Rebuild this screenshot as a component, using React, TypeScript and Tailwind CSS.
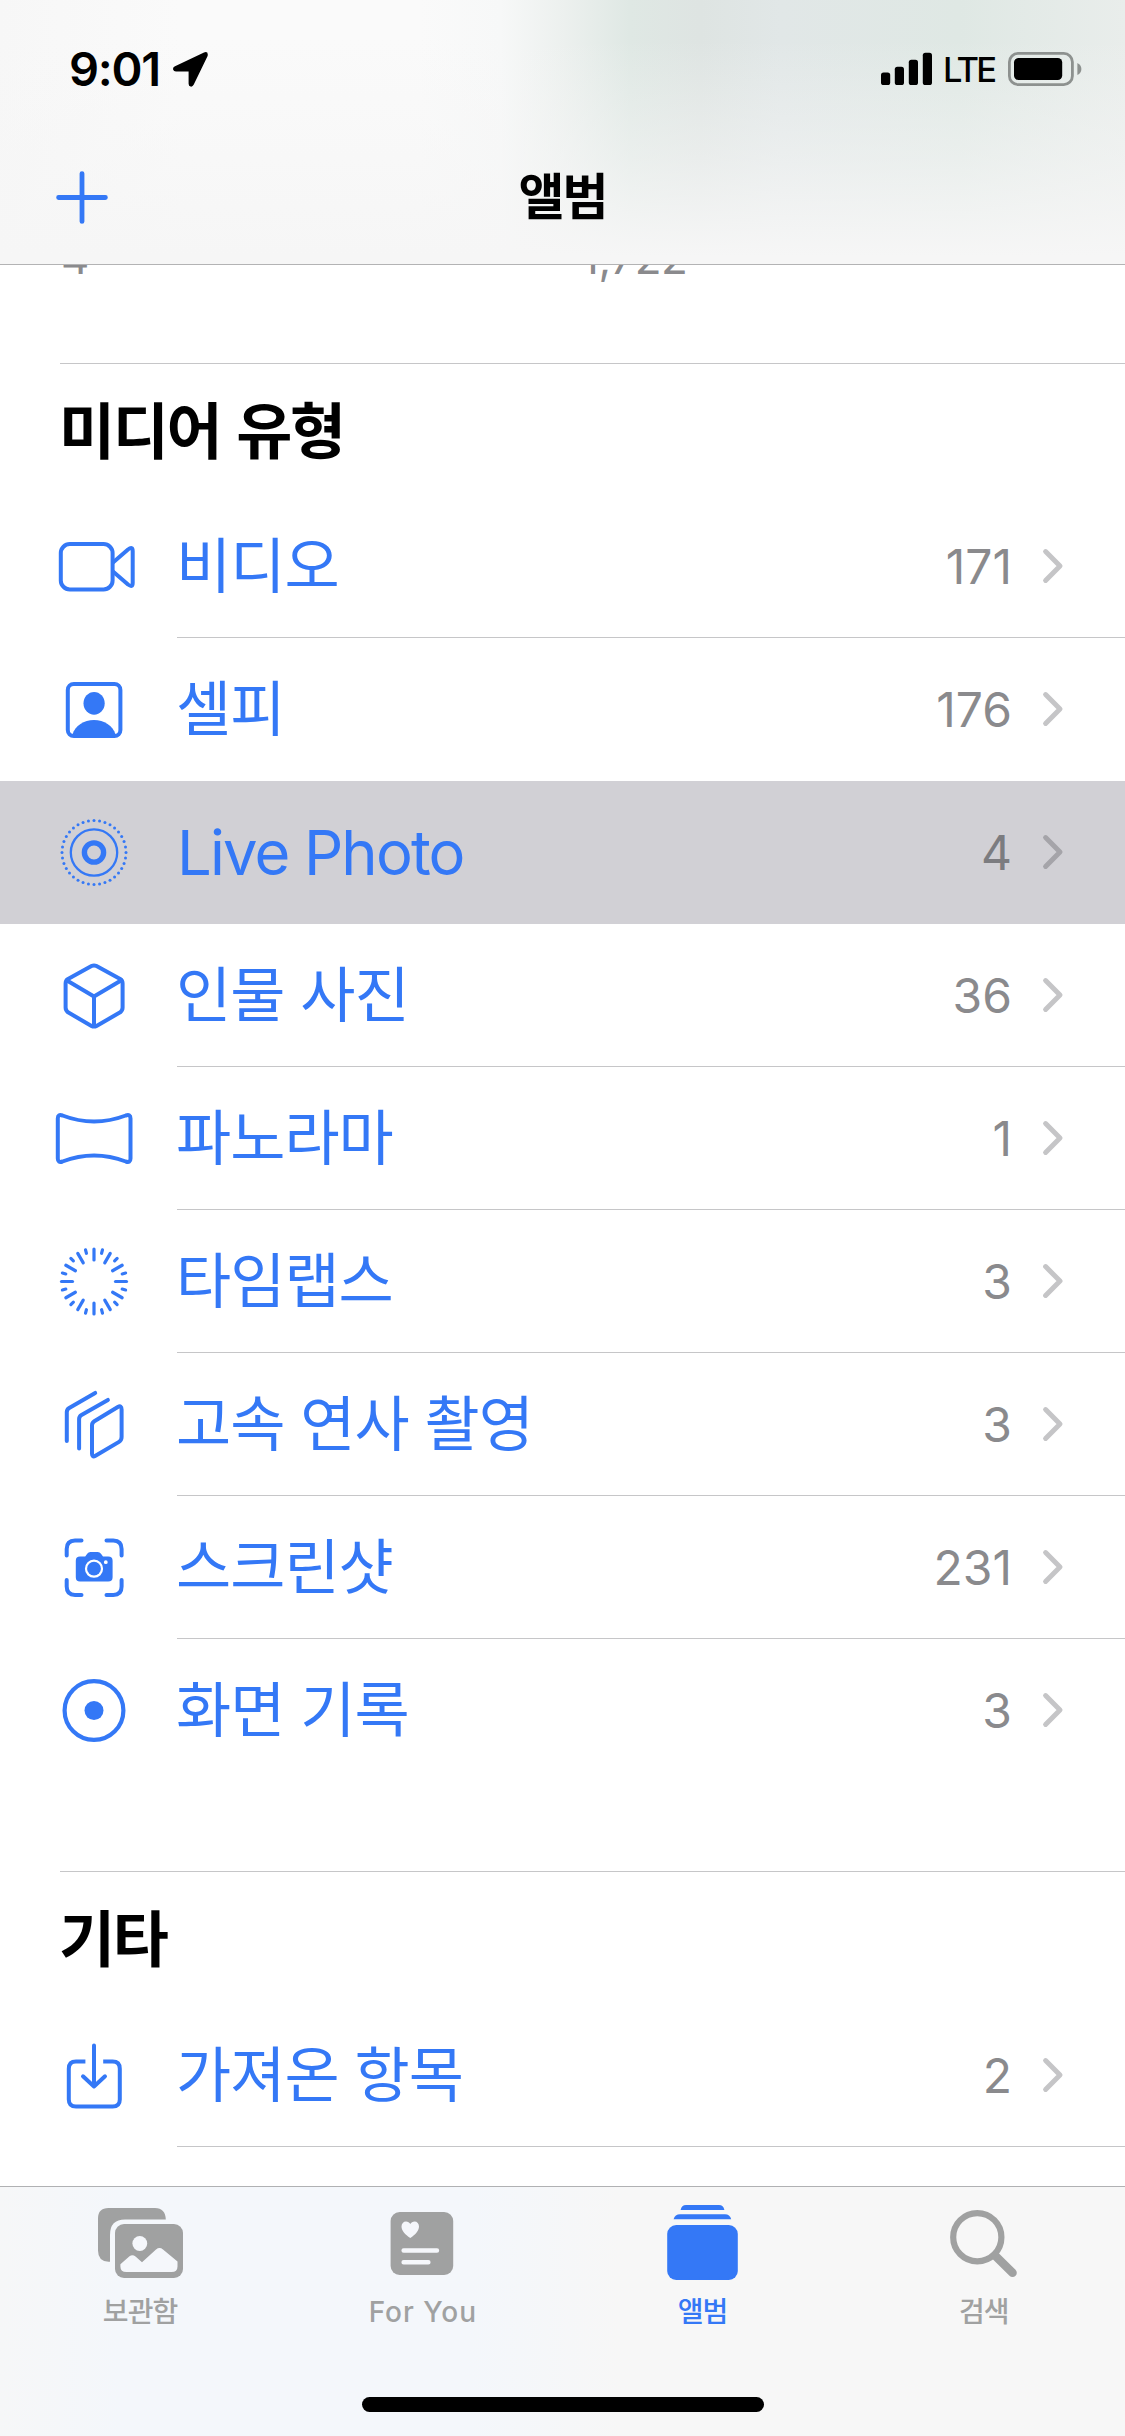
import React from "react";

const BLUE = "#3478f6";

function RowSvg({ children }: { children: React.ReactNode }) {
  return (
    <svg
      viewBox="-45 -45.5 90 91"
      className="h-[91px] w-[90px] shrink-0 text-[#3478f6]"
      fill="none"
      stroke="currentColor"
      strokeWidth={4}
      strokeLinecap="round"
      strokeLinejoin="round"
    >
      {children}
    </svg>
  );
}

const VideoIcon = () => (
  <RowSvg>
    <rect x={-33.2} y={-22.4} width={51.8} height={45.3} rx={9} />
    <path d="M19 -4 L34 -17 Q38.7 -20.5 38.7 -15.5 V16.5 Q38.7 21.5 34 18 L19 5" />
  </RowSvg>
);

const SelfieIcon = () => (
  <RowSvg>
    <rect x={-26.2} y={-25.5} width={52.6} height={52} rx={6} />
    <ellipse cx={0.1} cy={-6.2} rx={10.6} ry={11.4} fill="currentColor" stroke="none" />
    <path
      d="M-21.5 25 C-19 16 -10 10.5 0 10.5 S19 16 21.5 25 V27 H-21.5Z"
      fill="currentColor"
      stroke="none"
    />
  </RowSvg>
);

const LiveIcon = () => (
  <RowSvg>
    {Array.from({ length: 36 }, (_, i) => (
      <circle
        key={i}
        cx={32 * Math.cos((i * Math.PI) / 18)}
        cy={32 * Math.sin((i * Math.PI) / 18)}
        r={1.5}
        fill="currentColor"
        stroke="none"
      />
    ))}
    <circle r={23.2} strokeWidth={2.3} />
    <circle r={9.6} strokeWidth={5.4} />
  </RowSvg>
);

const CubeIcon = () => (
  <RowSvg>
    <path d="M-2.5 -29.4 Q0 -30.8 2.5 -29.4 L26.2 -16.4 Q28.6 -15 28.6 -12 V12 Q28.6 15 26.2 16.8 L2.5 30.4 Q0 31.8 -2.5 30.4 L-26 16.8 Q-28.4 15 -28.4 12 V-12 Q-28.4 -15 -26 -16.4 Z" />
    <path d="M-27 -15 L0 1 L27 -15 M0 1 V30" />
  </RowSvg>
);

const PanoramaIcon = () => (
  <RowSvg>
    <path d="M-36.2 -20 Q-36.2 -24.6 -31.5 -23 Q0 -11 31.8 -23 Q36.5 -24.6 36.5 -20 V20 Q36.5 24.6 31.8 23 Q0 11 -31.5 23 Q-36.2 24.6 -36.2 20 Z" />
  </RowSvg>
);

const TimelapseIcon = () => (
  <RowSvg>
    {Array.from({ length: 24 }, (_, i) => (
      <path
        key={i}
        d={i % 2 === 0 ? "M0 -21.5 V-32.5" : "M0 -29.2 V-32.7"}
        strokeWidth={3.2}
        transform={`rotate(${i * 15})`}
      />
    ))}
  </RowSvg>
);

const BurstIcon = () => (
  <RowSvg>
    <path d="M-2 1 Q-2 -1.7 0.3 -3.2 L23.8 -17.5 Q27.6 -19.6 27.6 -15 V12.5 Q27.6 15.8 25 17.4 L1.5 31.3 Q-2 33.3 -2 29.3 Z" />
    <path d="M-14.9 24 V-5.5 Q-14.9 -8.2 -12.5 -9.6 L13.9 -24.6" />
    <path d="M-27.2 16.5 V-12.5 Q-27.2 -15.2 -24.8 -16.6 L1.2 -31.6" />
  </RowSvg>
);

const ScreenshotIcon = () => (
  <RowSvg>
    <path d="M-27.3 -12 V-18.5 Q-27.3 -27 -19 -27 H-12.5 M27.6 -12 V-18.5 Q27.6 -27 19.3 -27 H12.5 M-27.3 12.5 V19 Q-27.3 27.5 -19 27.5 H-12.5 M27.6 12.5 V19 Q27.6 27.5 19.3 27.5 H12.5" />
    <path
      fillRule="evenodd"
      d="M-14 -11 H-8.8 L-6.8 -13.8 Q-5.6 -15.5 -3.5 -15.5 H3.7 Q5.8 -15.5 7 -13.8 L9 -11 H14.2 Q18.6 -11 18.6 -6.8 V9.7 Q18.6 14 14.2 14 H-14 Q-18.2 14 -18.2 9.7 V-6.8 Q-18.2 -11 -14 -11 Z M-9.1 1.2 a9.1 9.1 0 1 0 18.2 0 a9.1 9.1 0 1 0 -18.2 0 Z M9.9 -5.3 a1.9 1.9 0 1 0 3.8 0 a1.9 1.9 0 1 0 -3.8 0 Z"
      fill="currentColor"
      stroke="none"
    />
    <circle cy={1.2} r={6.9} fill="currentColor" stroke="none" />
  </RowSvg>
);

const RecordIcon = () => (
  <RowSvg>
    <circle r={29.4} strokeWidth={4.2} />
    <circle r={9.5} fill="currentColor" stroke="none" />
  </RowSvg>
);

const ImportIcon = () => (
  <RowSvg>
    <path
      strokeLinecap="butt"
      d="M-8.6 -14 H-18 Q-25.2 -14 -25.2 -6.8 V24 Q-25.2 31 -18 31 H18.6 Q25.8 31 25.8 24 V-6.8 Q25.8 -14 18.6 -14 H9.2"
    />
    <path d="M0 -30 V11 M-11 0.8 L0 11 L11 0.8" />
  </RowSvg>
);

type Item = {
  label: string;
  count: string;
  icon: () => React.ReactElement;
  active?: boolean;
  divider?: boolean;
};

const mediaTypes: Item[] = [
  { label: "비디오", count: "171", icon: VideoIcon, divider: true },
  { label: "셀피", count: "176", icon: SelfieIcon },
  { label: "Live Photo", count: "4", icon: LiveIcon, active: true },
  { label: "인물 사진", count: "36", icon: CubeIcon, divider: true },
  { label: "파노라마", count: "1", icon: PanoramaIcon, divider: true },
  { label: "타임랩스", count: "3", icon: TimelapseIcon, divider: true },
  { label: "고속 연사 촬영", count: "3", icon: BurstIcon, divider: true },
  { label: "스크린샷", count: "231", icon: ScreenshotIcon, divider: true },
  { label: "화면 기록", count: "3", icon: RecordIcon },
];

function Row({ item }: { item: Item }) {
  const Icon = item.icon;
  return (
    <li className={`flex h-[143px] items-center pl-[49px] ${item.active ? "bg-[#d1d0d5]" : ""}`}>
      <Icon />
      <div
        className={`ml-[38px] flex h-full flex-1 items-center border-b pr-[61px] ${
          item.divider ? "border-[#c6c6c8]" : "border-transparent"
        }`}
      >
        <span
          className={`flex-1 leading-[80px] text-[#3478f6] ${
            item.active ? "pt-[2px] text-[61.5px] tracking-[-1.85px]" : "-ml-px text-[60px] tracking-[-1px]"
          }`}
        >
          {item.label}
        </span>
        <span
          className={`pt-px text-[48px] leading-[60px] ${item.active ? "text-[#7c7c80]" : "text-[#8a8a8d]"}`}
        >
          {item.count}
        </span>
        <svg
          viewBox="0 0 22 36"
          className={`ml-[30px] h-[36px] w-[22px] ${item.active ? "text-[#a5a4a9]" : "text-[#c5c5c7]"}`}
          fill="none"
          stroke="currentColor"
          strokeWidth={5}
          strokeLinecap="round"
          strokeLinejoin="round"
        >
          <path d="M3.6 3.6 L18 18 L3.6 32.4" />
        </svg>
      </div>
    </li>
  );
}

function SectionTitle({ children }: { children: React.ReactNode }) {
  return (
    <div className="ml-[60px] h-[132px] border-t border-[#c6c6c8]">
      <h2 className="-ml-px pt-[25px] text-[61px] leading-[86px] font-bold tracking-[-2.4px] text-black [word-spacing:4px]">
        {children}
      </h2>
    </div>
  );
}

function StatusBar() {
  return (
    <div className="flex h-[138px] items-center justify-between pl-[69px] pr-[43px] text-black">
      <div className="flex items-center">
        <span className="w-[104px] text-[47px] leading-[60px] font-semibold tracking-[-1.3px]">9:01</span>
        <svg viewBox="0 0 35 35" className="h-[35px] w-[35px]" fill="currentColor">
          <path d="M31 0.4 Q35.6 -1 34.6 4 L20.8 32.6 Q19.6 35 17.6 34.6 Q15.6 34.2 15.6 31.8 V19.4 H3 Q0.6 19.4 0.1 17.4 Q-0.3 15.3 2 14.2 Z" />
        </svg>
      </div>
      <div className="flex items-center">
        <svg viewBox="0 0 52 34" className="h-[34px] w-[52px]" fill="currentColor">
          <rect x={0} y={20.5} width={9.2} height={12.5} rx={2.6} />
          <rect x={13.8} y={14.7} width={9.2} height={18.3} rx={2.6} />
          <rect x={27.8} y={7.7} width={9.2} height={25.3} rx={2.6} />
          <rect x={41.8} y={0.7} width={9.2} height={32.3} rx={2.6} />
        </svg>
        <span className="ml-[10px] w-[65px] pt-[2px] text-[34.5px] leading-[40px] font-medium tracking-[-2.8px]">
          LTE
        </span>
        <svg viewBox="0 0 74 34" className="h-[34px] w-[74px]" fill="none">
          <rect x={1.4} y={1.4} width={63} height={31.2} rx={8.6} stroke="#8d918f" strokeWidth={2.8} />
          <rect x={6} y={6} width={48.2} height={22} rx={4.5} fill="#000" />
          <path d="M69.4 11 Q73.4 13 73.4 17 T69.4 23 Z" fill="#8d918f" />
        </svg>
      </div>
    </div>
  );
}

function LibraryIcon() {
  return (
    <svg viewBox="0 0 86 72" className="h-[72px] w-[86px]">
      <path
        fill="currentColor"
        d="M12 55.8 H10.5 Q0 55.3 0 44.5 V12.5 Q0 2 10.5 2 H57 Q67.4 2 67.8 13.6 H27 Q12 13.6 12 29 Z"
      />
      <rect x={17} y={18} width={68} height={54} rx={9} fill="currentColor" />
      <circle cx={41.8} cy={37.5} r={7.4} fill="#f5f7fb" />
      <path
        fill="#f5f7fb"
        d="M22.4 58.2 L31.5 50.3 Q34.5 48 37.5 50.6 L44 56.2 L58 43.5 Q61.6 40.6 65 43.5 L79.5 55.5 V60.5 Q79.5 66 73.5 66 H28.5 Q22.4 66 22.4 60.5 Z"
      />
    </svg>
  );
}

function ForYouIcon() {
  return (
    <svg viewBox="0 0 64 72" className="h-[72px] w-[64px]">
      <rect x={0.6} y={6} width={62.6} height={63} rx={9} fill="currentColor" />
      <path
        fill="#f5f7fb"
        d="M20.3 32 C15 28.5 11.5 24.5 11.5 20.5 C11.5 17.5 13.5 15.5 16 15.5 C18 15.5 19.4 16.5 20.3 18 C21.2 16.5 22.6 15.5 24.6 15.5 C27.1 15.5 29 17.5 29 20.5 C29 24.5 25.6 28.5 20.3 32 Z"
      />
      <path d="M13.6 44.5 H47 M13.6 56.2 H38.4" stroke="#f5f7fb" strokeWidth={4.4} strokeLinecap="round" />
    </svg>
  );
}

function AlbumsIcon() {
  return (
    <svg viewBox="0 0 73 75" className="h-[75px] w-[73px]" fill="currentColor">
      <path d="M13.6 5 Q14.6 0 19 0 H52 Q56.4 0 57.4 5 Z" />
      <path d="M6.6 14.2 Q8 9.2 13 9.2 H58 Q62.8 9.2 64.2 14.2 Z" />
      <rect x={0.2} y={20} width={70.6} height={55} rx={9} />
    </svg>
  );
}

function SearchIcon() {
  return (
    <svg
      viewBox="0 0 68 70"
      className="h-[70px] w-[68px]"
      fill="none"
      stroke="currentColor"
      strokeLinecap="round"
    >
      <circle cx={27.3} cy={29.2} r={24.1} strokeWidth={6.2} />
      <path d="M45.5 48 L62.5 64.8" strokeWidth={8.6} />
    </svg>
  );
}

const tabs = [
  { label: "보관함", icon: LibraryIcon, pad: "pt-[19px]" },
  { label: "For You", icon: ForYouIcon, pad: "pt-[19px]" },
  { label: "앨범", icon: AlbumsIcon, pad: "pt-[18px]", active: true },
  { label: "검색", icon: SearchIcon, pad: "pt-[21px]" },
];

export default function App() {
  return (
    <div className="flex h-[2436px] w-[1125px] flex-col overflow-hidden bg-white font-['Inter','Noto_Sans_CJK_KR',sans-serif]">
      <header className="h-[265px] shrink-0 border-b border-[#b3b3b4] bg-[linear-gradient(to_bottom,rgba(246,246,246,0)_15%,rgba(246,246,246,0.5)_60%,rgba(246,246,246,1)_97%),linear-gradient(to_right,#f7f7f7_0px,#fafafa_180px,#fafafa_420px,#f7f8f8_500px,#ecf0ee_565px,#dfe8e4_630px,#dee4e2_700px,#e1e7e7_780px,#dfe8e4_960px,#e9edeb_1125px)]">
        <StatusBar />
        <div className="grid h-[120px] grid-cols-[1fr_auto_1fr] items-center">
          <svg
            viewBox="0 0 52 54"
            className="ml-[56px] h-[54px] w-[52px]"
            fill="none"
            stroke={BLUE}
            strokeWidth={4.8}
            strokeLinecap="round"
          >
            <path d="M26 2.6 V50.4 M2.6 26.5 H49.4" />
          </svg>
          <h1 className="pb-[3px] text-[50px] leading-[70px] font-bold tracking-[-2px] text-black">앨범</h1>
          <span />
        </div>
      </header>

      <main className="min-h-0 flex-1 overflow-hidden">
        <div className="grid h-[98px] grid-cols-2 overflow-hidden pl-[61px] text-[44px] leading-[60px] text-[#8a8a8d]">
          <span className="mt-[-37px]">4</span>
          <span className="mt-[-37px] ml-[-12px] tracking-[-0.4px]">1,722</span>
        </div>
        <SectionTitle>미디어 유형</SectionTitle>
        <ul className="h-[1376px]">
          {mediaTypes.map((item) => (
            <Row key={item.label} item={item} />
          ))}
        </ul>
        <SectionTitle>기타</SectionTitle>
        <ul className="pt-px">
          <Row item={{ label: "가져온 항목", count: "2", icon: ImportIcon, divider: true }} />
        </ul>
      </main>

      <footer className="flex h-[250px] shrink-0 flex-col border-t border-[#b0b1b3] bg-[linear-gradient(to_right,#f6f7f8_0px,#f4f7fb_120px,#f4f7fb_470px,#f7f7f7_620px,#f7f7f7_1125px)]">
        <nav className="grid h-[210px] grid-cols-4">
          {tabs.map((t) => {
            const Icon = t.icon;
            return (
              <a
                key={t.label}
                className={`flex flex-col items-center ${t.pad} ${t.active ? "text-[#3478f6]" : "text-[#a0a1a1]"}`}
              >
                <Icon />
                <span
                  className={`mt-auto mb-[65px] text-[28px] leading-[40px] font-medium whitespace-nowrap ${
                    t.label === "For You" ? "pl-[2px] text-[28.5px] tracking-[1px]" : "pr-px tracking-[-0.8px]"
                  }`}
                >
                  {t.label}
                </span>
              </a>
            );
          })}
        </nav>
        <div className="mx-auto h-[15px] w-[402px] rounded-full bg-black" />
      </footer>
    </div>
  );
}
